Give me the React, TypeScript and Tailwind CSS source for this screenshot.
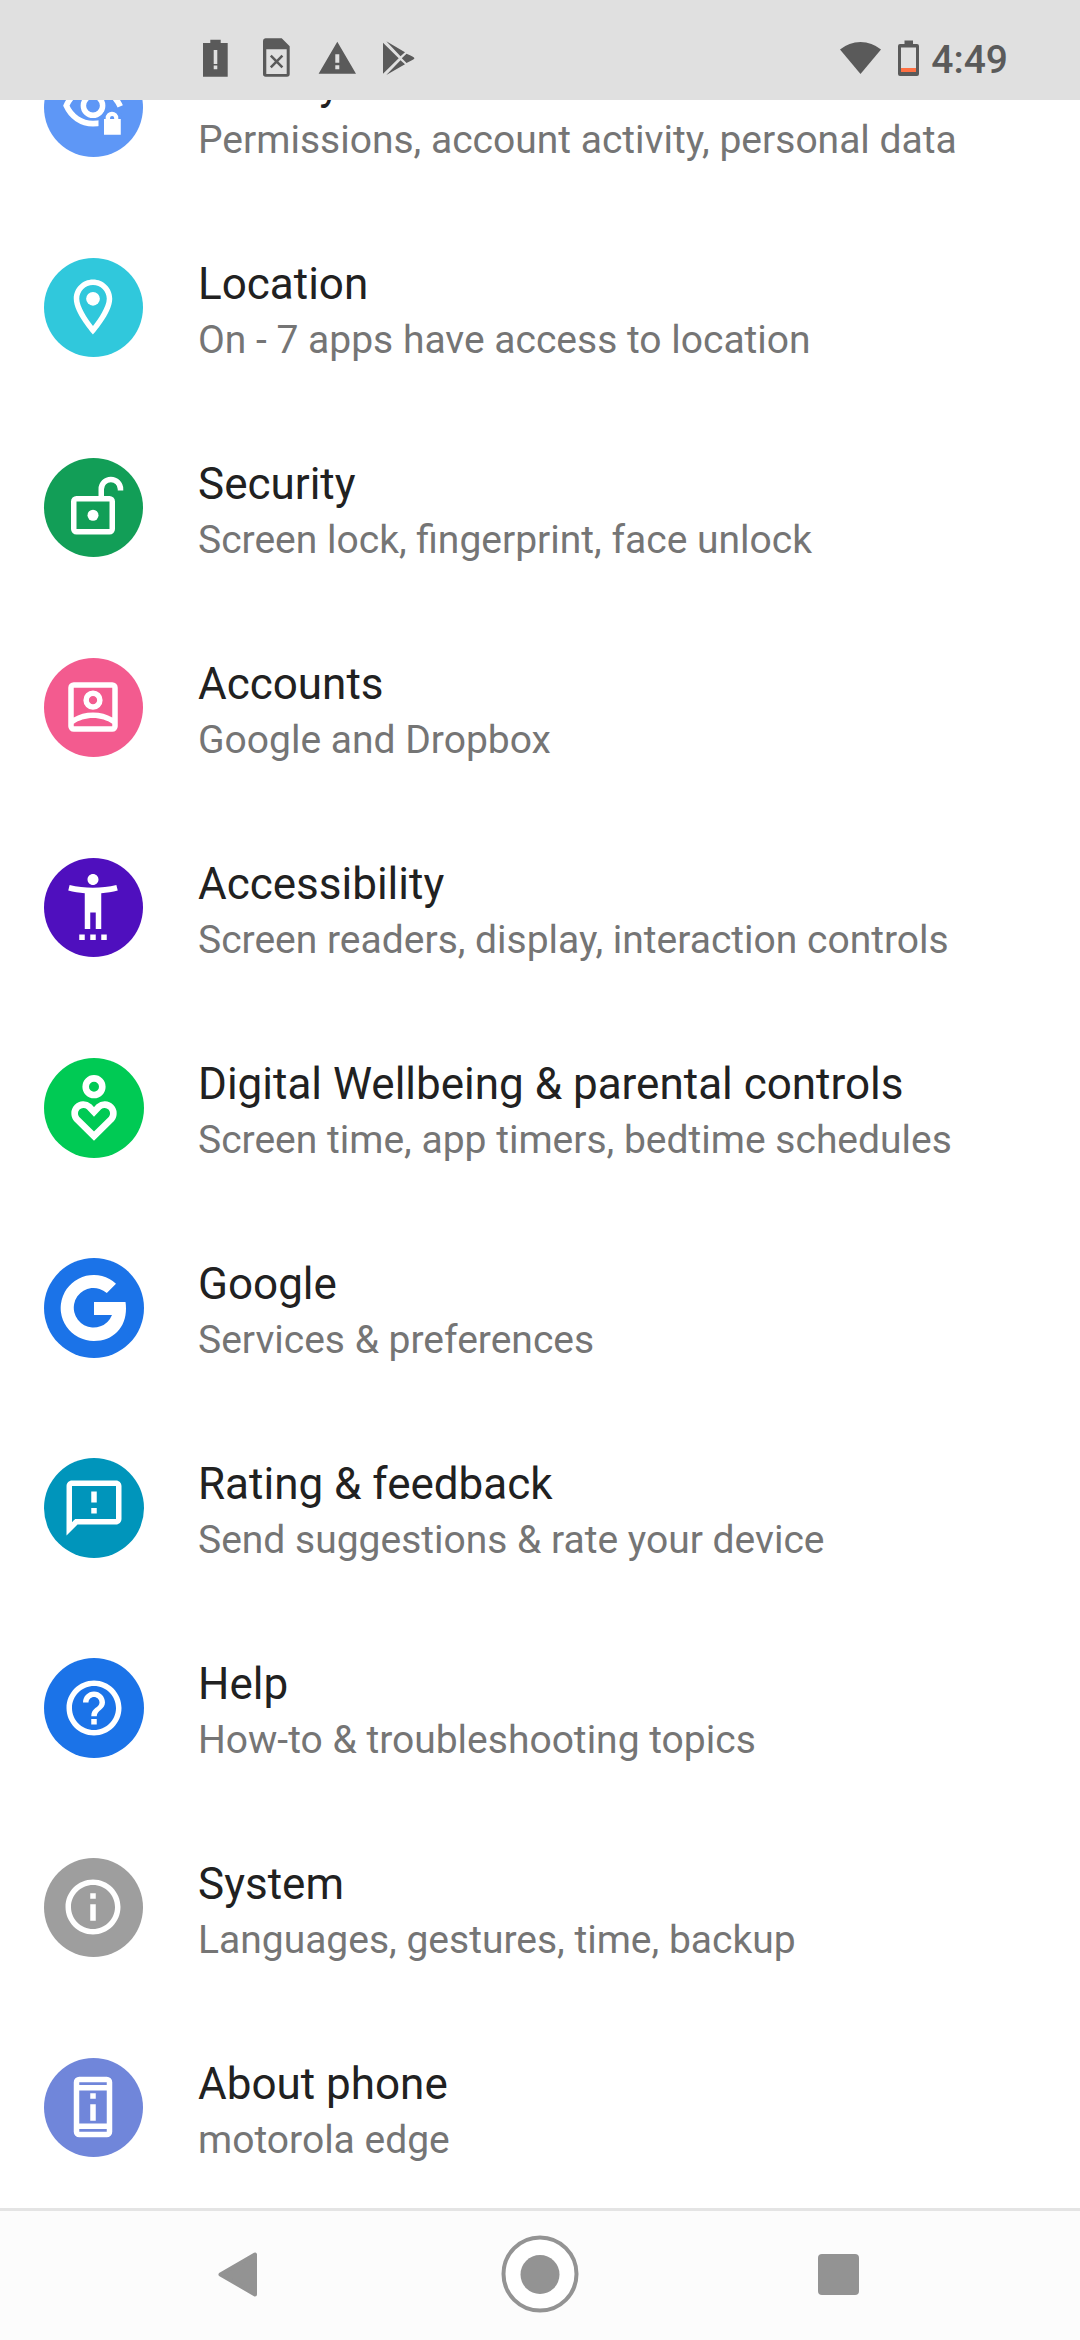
import type { ReactNode } from "react";

type Item = {
  title: string;
  summary: string;
  color: string;
  large?: boolean;
  icon: ReactNode;
};

// 24dp glyph inside the round badge
function Glyph({ children }: { children: ReactNode }) {
  return (
    <svg viewBox="0 0 24 24" className="size-[66px]" fill="#fff" fillRule="evenodd">
      {children}
    </svg>
  );
}

const items: Item[] = [
  {
    title: "Privacy",
    summary: "Permissions, account activity, personal data",
    color: "bg-[#5e97f6]",
    icon: (
      <Glyph>
        <path
          d="M15 17.800c-1 .200-2 .250-3 .250C7.800 18 4.100 15.600 2.300 11.500C4.100 7.400 7.900 5 12 5s8 2.500 9.900 6.800"
          fill="none"
          stroke="#fff"
          strokeWidth="2.100"
        />
        <circle cx="12" cy="11.500" r="3.500" fill="none" stroke="#fff" strokeWidth="2" />
        {/* gap between the eye and the padlock */}
        <circle cx="18.900" cy="16" r="3.700" fill="#5e97f6" />
        <path d="M14 16.400h8v7h-8z" fill="#5e97f6" />
        <path d="M16 16.400h.600V16a2.300 2.300 0 0 1 4.600 0v.400h.900v5.700H16zM18.200 16.400h1.500V16a.750.750 0 0 0-1.500 0z" />
      </Glyph>
    ),
  },
  {
    title: "Location",
    summary: "On - 7 apps have access to location",
    color: "bg-[#30c8dc]",
    icon: (
      <Glyph>
        <path d="M12 2C8.130 2 5 5.130 5 9c0 5.250 7 13 7 13s7-7.750 7-13c0-3.870-3.130-7-7-7zM7 9c0-2.760 2.240-5 5-5s5 2.240 5 5c0 2.880-2.880 7.190-5 9.880C9.920 16.210 7 11.850 7 9z" />
        <circle cx="12" cy="9" r="2.500" />
      </Glyph>
    ),
  },
  {
    title: "Security",
    summary: "Screen lock, fingerprint, face unlock",
    color: "bg-[#129e57]",
    icon: (
      <Glyph>
        <path d="M6 8h12a2 2 0 0 1 2 2v10a2 2 0 0 1-2 2H6a2 2 0 0 1-2-2V10a2 2 0 0 1 2-2zM6 10v10h12V10z" />
        <path d="M15 9V5.500a3.500 3.500 0 0 1 7 0V6" fill="none" stroke="#fff" strokeWidth="2" />
        <circle cx="12" cy="15" r="2" />
      </Glyph>
    ),
  },
  {
    title: "Accounts",
    summary: "Google and Dropbox",
    color: "bg-[#f35b8f]",
    icon: (
      <Glyph>
        <path d="M5 3h14a2 2 0 0 1 2 2v14a2 2 0 0 1-2 2H5a2 2 0 0 1-2-2V5a2 2 0 0 1 2-2zM5 5v10.800C6.900 14.700 9.300 14 12 14s5.100.700 7 1.800V5zM5 19h14v-.900C17.200 16.800 14.700 16 12 16s-5.200.8-7 2.100z" />
        <path d="M12 6a3.500 3.500 0 1 1 0 7 3.500 3.500 0 0 1 0-7zM12 8a1.500 1.500 0 1 0 0 3 1.500 1.500 0 0 0 0-3z" />
      </Glyph>
    ),
  },
  {
    title: "Accessibility",
    summary: "Screen readers, display, interaction controls",
    color: "bg-[#4f0fbe]",
    icon: (
      <Glyph>
        <path d="M20.500 4c-2.610.700-5.670 1-8.500 1s-5.890-.300-8.500-1L3 6c1.860.500 4 .830 6 1v13h2v-6h2v6h2V7c2-.170 4.140-.500 6-1l-.500-2zM12 4c1.100 0 2-.900 2-2s-.900-2-2-2-2 .900-2 2 .900 2 2 2zM7 24h2v-2H7v2zm4 0h2v-2h-2v2zm4 0h2v-2h-2v2z" />
      </Glyph>
    ),
  },
  {
    title: "Digital Wellbeing & parental controls",
    summary: "Screen time, app timers, bedtime schedules",
    color: "bg-[#00ca54]",
    large: true,
    icon: (
      <svg viewBox="0 0 100 100" className="size-[100px]" fill="none" stroke="#fff" strokeWidth="6.600">
        <circle cx="50" cy="28.700" r="8.300" />
        <path d="M50 78.200L32.700 61.100a8.800 8.800 0 0 1 12.400-12.400L50 53.900l4.900-5.200a8.800 8.800 0 0 1 12.400 12.400z" />
      </svg>
    ),
  },
  {
    title: "Google",
    summary: "Services & preferences",
    color: "bg-[#1b73e8]",
    large: true,
    icon: (
      <svg viewBox="0 0 100 100" className="size-[100px]" fill="#fff">
        <path d="M72 25.700A33 33 0 1 0 50 83C69 83 82 70 82 50.500Q82 47 81.500 44H50v13h18A19.800 19.800 0 1 1 62.800 35z" />
      </svg>
    ),
  },
  {
    title: "Rating & feedback",
    summary: "Send suggestions & rate your device",
    color: "bg-[#0095bb]",
    large: true,
    icon: (
      <Glyph>
        <path d="M20 2H4c-1.100 0-1.990.900-1.990 2L2 22l4-4h14c1.100 0 2-.900 2-2V4c0-1.100-.900-2-2-2zm0 14H5.170l-.590.590-.580.580V4h16v12zm-9-4h2v2h-2zm0-6h2v4h-2z" />
      </Glyph>
    ),
  },
  {
    title: "Help",
    summary: "How-to & troubleshooting topics",
    color: "bg-[#1b73e8]",
    large: true,
    icon: (
      <Glyph>
        <path d="M11 18h2v-2h-2v2zm1-16C6.480 2 2 6.480 2 12s4.480 10 10 10 10-4.480 10-10S17.520 2 12 2zm0 18c-4.410 0-8-3.590-8-8s3.590-8 8-8 8 3.590 8 8-3.590 8-8 8zm0-14c-2.210 0-4 1.790-4 4h2c0-1.100.900-2 2-2s2 .900 2 2c0 2-3 1.750-3 5h2c0-2.250 3-2.500 3-5 0-2.210-1.790-4-4-4z" />
      </Glyph>
    ),
  },
  {
    title: "System",
    summary: "Languages, gestures, time, backup",
    color: "bg-[#9e9e9e]",
    icon: (
      <Glyph>
        <path d="M11 7h2v2h-2zm0 4h2v6h-2zm1-9C6.480 2 2 6.480 2 12s4.480 10 10 10 10-4.480 10-10S17.520 2 12 2zm0 18c-4.410 0-8-3.590-8-8s3.590-8 8-8 8 3.590 8 8-3.590 8-8 8z" />
      </Glyph>
    ),
  },
  {
    title: "About phone",
    summary: "motorola edge",
    color: "bg-[#7086da]",
    icon: (
      <Glyph>
        <path d="M7 1h10a2 2 0 0 1 2 2v18a2 2 0 0 1-2 2H7a2 2 0 0 1-2-2V3a2 2 0 0 1 2-2zM7 3v1h10V3zM7 6v12h10V6zM7 20v1h10v-1z" />
        <path d="M11 7h2v2h-2zM11 11h2v6h-2z" />
      </Glyph>
    ),
  },
];

function StatusBar() {
  return (
    <header className="relative z-10 flex h-[100px] shrink-0 items-start justify-between bg-[#e0e0e0] pl-[203px] pr-[72px] text-[#5a5a5a]">
      <svg viewBox="203 0 215 100" className="h-[100px] w-[215px]" fill="currentColor" fillRule="evenodd">
        <path d="M203 43h7.300v-3.300h10.400V43h7v33.700H203zM213.700 50v14h3.600V50zM213.700 65.500v3.800h3.600v-3.800z" />
        <path d="M265.500 38.300h16.200l8 8V74a2.700 2.700 0 0 1-2.700 2.700h-21.300A2.700 2.700 0 0 1 263 74V41a2.700 2.700 0 0 1 2.500-2.700zM266.300 49.300V74h20.400V49.300z" />
        <path d="M270.800 55.700l11.600 11.600M282.400 55.700l-11.600 11.600" stroke="currentColor" strokeWidth="2.500" />
        <path d="M337.300 41.700L356 73.700h-37.400zM335.300 54.300v8.400h4v-8.400zM335.300 65.200v4h4v-4z" />
        <path d="M383 42.700l15.700 15.600L383 73.700zM386.300 41.300L405 52.300l-4.500 4zM386.300 75L405 64.200l-4.500-4zM401.800 58.300l4.700-4.600 3.500 1.600q4.400 2 4.400 3t-4.400 3l-3.500 1.600z" />
      </svg>
      <div className="flex">
        <svg viewBox="838 0 82 100" className="h-[100px] w-[82px]" fill="currentColor" fillRule="evenodd">
          <path d="M839 49.500a32 32 0 0 1 41 0L859.500 74z" />
          <path d="M903.500 40.500h8.500V44h4a2 2 0 0 1 2 2v28a2 2 0 0 1-2 2h-17a2 2 0 0 1-2-2V46a2 2 0 0 1 2-2h4.500zM900 47.500V72h15V47.500z" />
          <path d="M900 68h15v4h-15z" fill="#ff7043" />
        </svg>
        <span className="pl-2.5 pt-[37px] text-[39px] font-medium leading-[46px]">4:49</span>
      </div>
    </header>
  );
}

function SettingsRow({ item }: { item: Item }) {
  return (
    <li className="flex h-[200px] items-start pl-11">
      <div
        className={`mt-[50px] flex shrink-0 overflow-hidden rounded-full ${item.color} ${
          item.large ? "size-[100px] items-center justify-center" : "size-[99px] pl-4 pt-4"
        }`}
      >
        {item.icon}
      </div>
      <div className={item.large ? "pl-[54px] pt-[50px]" : "pl-[55px] pt-[50px]"}>
        <h2 className="text-[44px] leading-[52px] text-[#212121]">{item.title}</h2>
        <p className="mt-[7px] text-[39px] leading-[46px] text-[#757575]">{item.summary}</p>
      </div>
    </li>
  );
}

function NavBar() {
  return (
    <nav className="flex h-[132px] shrink-0 items-center justify-between border-t-[3px] border-[#e4e4e4] bg-[#fcfcfc] px-[210px] pb-[3px] text-[#939393]">
      <svg viewBox="0 0 60 60" className="size-[60px]" fill="currentColor" stroke="currentColor" strokeWidth="4" strokeLinejoin="round">
        <path d="M10.500 30.500L45 10.500v40z" />
      </svg>
      <svg viewBox="0 0 80 80" className="size-20">
        <circle cx="40" cy="40" r="36.500" fill="#fff" stroke="currentColor" strokeWidth="4" />
        <circle cx="40" cy="40.500" r="19.500" fill="currentColor" />
      </svg>
      <svg viewBox="0 0 60 60" className="size-[60px]" fill="currentColor">
        <rect x="8" y="10" width="41" height="41" rx="4" />
      </svg>
    </nav>
  );
}

export default function App() {
  return (
    <div className="flex h-[2340px] w-[1080px] flex-col overflow-hidden bg-white font-[Roboto,sans-serif]">
      <StatusBar />
      <main className="h-[2108px] overflow-hidden">
        <ul className="-mt-[92px]">
          {items.map((item) => (
            <SettingsRow key={item.title} item={item} />
          ))}
        </ul>
      </main>
      <NavBar />
    </div>
  );
}
